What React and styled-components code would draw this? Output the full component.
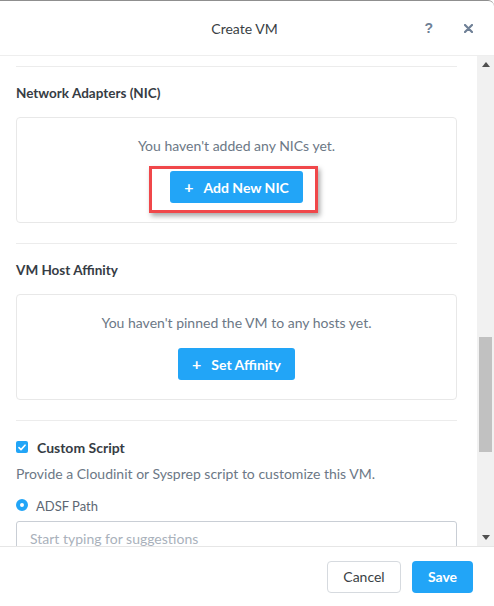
import React from "react";
import styled, { createGlobalStyle } from "styled-components";

const Global = createGlobalStyle`
  html, body { margin: 0; padding: 0; background: #fff; }
  body { font-family: "Lato", "Open Sans", sans-serif; -webkit-font-smoothing: antialiased; }
  * { box-sizing: border-box; }
`;

const Modal = styled.div`
  width: 494px;
  height: 606px;
  display: flex;
  flex-direction: column;
  background: #fff;
  border-top: 1px solid #8f8f8f;
  border-top-right-radius: 6px;
  overflow: hidden;
`;

const Header = styled.div`
  height: 55px;
  flex: none;
  display: flex;
  align-items: center;
  position: relative;
  border-bottom: 1px solid #eeeeee;
`;

const Title = styled.div`
  flex: 1;
  text-align: center;
  font-size: 14px;
  color: #3a3f45;
  padding-right: 5px;
`;

const HeaderIcons = styled.div`
  position: absolute;
  right: 21px;
  top: 0;
  bottom: 0;
  display: flex;
  align-items: center;
  gap: 31px;
`;

const IconGlyph = styled.span`
  font-size: ${(p) => p.size || 14}px;
  font-weight: 700;
  color: #6f8096;
  line-height: 1;
  font-family: "Liberation Sans", Arial, sans-serif;
`;

const BodyRow = styled.div`
  flex: 1;
  display: flex;
  min-height: 0;
`;

const Scroller = styled.div`
  flex: 1;
  overflow: hidden;
  padding: 10px 20px 0 16px;
  display: flex;
  flex-direction: column;
`;

const Divider = styled.div`
  height: 1px;
  background: #ececec;
  flex: none;
`;

const Section = styled.div`
  display: flex;
  flex-direction: column;
  padding: 18px 0 20px;
`;

const Heading = styled.div`
  font-size: 13.5px;
  font-weight: 700;
  color: #363c44;
  line-height: 16px;
  margin-bottom: 16px;
`;

const Card = styled.div`
  border: 1px solid #e8e8e8;
  border-radius: 4px;
  padding: 20px 0 19px;
  display: flex;
  flex-direction: column;
  align-items: center;
`;

const EmptyText = styled.div`
  font-size: 14px;
  color: #6c7886;
  line-height: 16px;
  margin-bottom: 17px;
`;

const ButtonWrap = styled.div`
  position: relative;
`;

const PrimaryButton = styled.button`
  height: 32px;
  padding: 0 14px;
  border: none;
  border-radius: 3px;
  background: #22a5f7;
  color: #fff;
  font-family: inherit;
  font-size: 14px;
  font-weight: 700;
  display: flex;
  align-items: center;
  gap: 10px;
`;

const Plus = styled.span`
  font-size: 16px;
  font-weight: 700;
  line-height: 1;
  margin-top: -1px;
`;

const Highlight = styled.div`
  position: absolute;
  left: -21px;
  right: -15px;
  top: -5px;
  bottom: -10px;
  border: 3px solid #f0474a;
  box-shadow: 2px 3px 5px rgba(0, 0, 0, 0.35);
  pointer-events: none;
`;

const ScriptSection = styled.div`
  display: flex;
  flex-direction: column;
  padding-top: 19px;
`;

const CheckRow = styled.div`
  display: flex;
  align-items: center;
  gap: 9px;
  height: 14px;
`;

const CheckBox = styled.span`
  width: 12px;
  height: 12px;
  border-radius: 2px;
  background: #22a5f7;
  display: flex;
  align-items: center;
  justify-content: center;
`;

const CheckLabel = styled.span`
  font-size: 14px;
  font-weight: 700;
  color: #363c44;
`;

const Description = styled.div`
  font-size: 14px;
  color: #6c7886;
  line-height: 16px;
  margin-top: 12px;
`;

const RadioRow = styled.div`
  display: flex;
  align-items: center;
  gap: 8px;
  margin-top: 16px;
  height: 14px;
`;

const Radio = styled.span`
  width: 12px;
  height: 12px;
  border-radius: 50%;
  border: 4px solid #22a5f7;
  background: #fff;
`;

const RadioLabel = styled.span`
  font-size: 13px;
  color: #5d6773;
  margin-top: 2px;
`;

const Input = styled.div`
  margin-top: 9px;
  height: 34px;
  border: 1px solid #c9ced5;
  border-radius: 3px;
  padding: 0 13px;
  display: flex;
  align-items: center;
  font-size: 14px;
  color: #a9b1bb;
  flex: none;
`;

const ScrollTrack = styled.div`
  width: 17px;
  flex: none;
  background: #f1f1f1;
  display: flex;
  flex-direction: column;
  align-items: center;
`;

const ScrollArrow = styled.div`
  height: 17px;
  width: 17px;
  display: flex;
  align-items: center;
  justify-content: center;
  flex: none;
`;

const ScrollSpace = styled.div`
  flex: ${(p) => p.grow};
`;

const ScrollThumb = styled.div`
  width: 13px;
  height: 115px;
  background: #c1c1c1;
  flex: none;
`;

const Footer = styled.div`
  height: 60px;
  flex: none;
  border-top: 1px solid #e6e6e6;
  display: flex;
  align-items: center;
  justify-content: flex-end;
  gap: 11px;
  padding: 0 21px 0 0;
`;

const CancelButton = styled.button`
  height: 32px;
  width: 74px;
  border: 1px solid #d6dadf;
  border-radius: 4px;
  background: #fff;
  color: #3a3f45;
  font-family: inherit;
  font-size: 14px;
`;

const SaveButton = styled.button`
  height: 32px;
  width: 61px;
  border: none;
  border-radius: 4px;
  background: #22a5f7;
  color: #fff;
  font-family: inherit;
  font-size: 14px;
  font-weight: 700;
`;

const Tri = ({ up }) => (
  <svg width="8" height="5" viewBox="0 0 8 5">
    <path d={up ? "M0 5 L4 0 L8 5 Z" : "M0 0 L8 0 L4 5 Z"} fill="#505050" />
  </svg>
);

export default function App() {
  return (
    <>
      <Global />
      <Modal>
        <Header>
          <Title>Create VM</Title>
          <HeaderIcons>
            <IconGlyph size={14}>?</IconGlyph>
            <svg width="9" height="9" viewBox="0 0 9 9">
              <path d="M1 1 L8 8 M8 1 L1 8" stroke="#6f8096" strokeWidth="2.2" strokeLinecap="round" />
            </svg>
          </HeaderIcons>
        </Header>
        <BodyRow>
          <Scroller>
            <Divider />
            <Section>
              <Heading>Network Adapters (NIC)</Heading>
              <Card>
                <EmptyText>You haven't added any NICs yet.</EmptyText>
                <ButtonWrap>
                  <PrimaryButton>
                    <Plus>+</Plus>Add New NIC
                  </PrimaryButton>
                  <Highlight />
                </ButtonWrap>
              </Card>
            </Section>
            <Divider />
            <Section>
              <Heading>VM Host Affinity</Heading>
              <Card>
                <EmptyText>You haven't pinned the VM to any hosts yet.</EmptyText>
                <PrimaryButton>
                  <Plus>+</Plus>Set Affinity
                </PrimaryButton>
              </Card>
            </Section>
            <Divider />
            <ScriptSection>
              <CheckRow>
                <CheckBox>
                  <svg width="8" height="7" viewBox="0 0 8 7">
                    <path d="M1 3.6 L3 5.6 L7 1.2" stroke="#fff" strokeWidth="1.6" fill="none" strokeLinecap="round" strokeLinejoin="round" />
                  </svg>
                </CheckBox>
                <CheckLabel>Custom Script</CheckLabel>
              </CheckRow>
              <Description>Provide a Cloudinit or Sysprep script to customize this VM.</Description>
              <RadioRow>
                <Radio />
                <RadioLabel>ADSF Path</RadioLabel>
              </RadioRow>
              <Input>Start typing for suggestions</Input>
            </ScriptSection>
          </Scroller>
          <ScrollTrack>
            <ScrollArrow><Tri up /></ScrollArrow>
            <ScrollSpace grow={264} />
            <ScrollThumb />
            <ScrollSpace grow={77} />
            <ScrollArrow><Tri /></ScrollArrow>
          </ScrollTrack>
        </BodyRow>
        <Footer>
          <CancelButton>Cancel</CancelButton>
          <SaveButton>Save</SaveButton>
        </Footer>
      </Modal>
    </>
  );
}
